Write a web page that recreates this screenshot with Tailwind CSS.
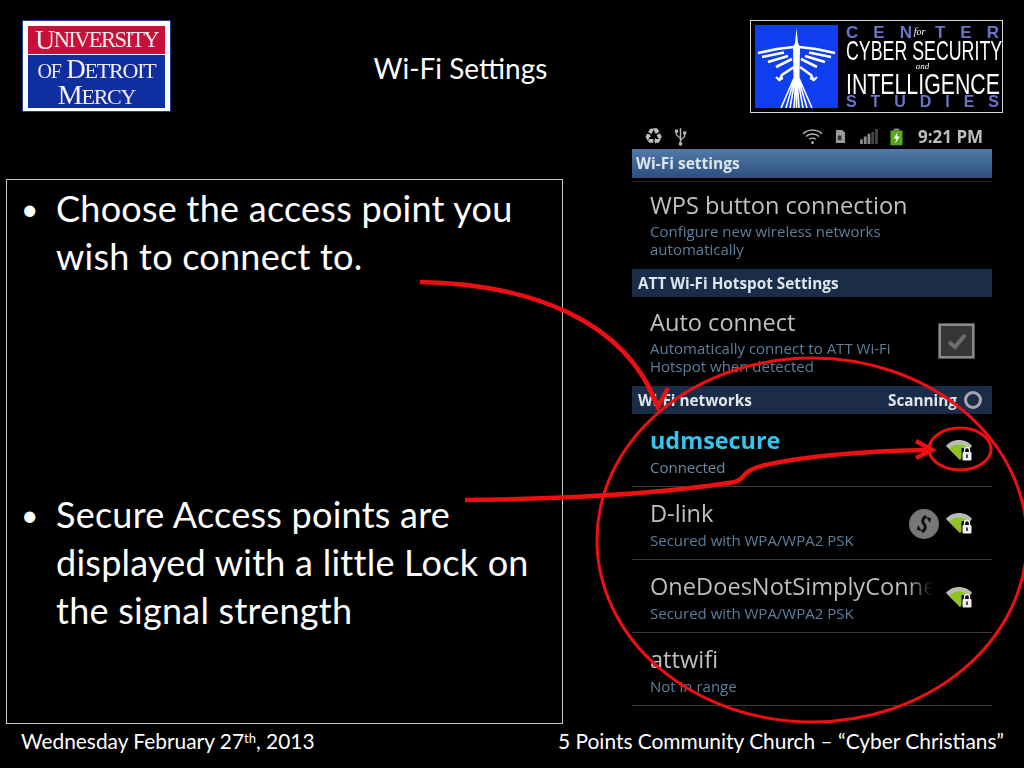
<!DOCTYPE html>
<html lang="en">
<head>
    <meta charset="UTF-8">
    <title>Wi-Fi Settings</title>
    <script src="https://cdn.jsdelivr.net/npm/@tailwindcss/browser@4"></script>
</head>
<body class="bg-black">
    <svg class="hidden">
        <defs>
            <symbol id="wifi-lock" viewBox="0 0 30 26">
                <path d="M2 9 C8 1 22 1 28 9 L16 23 Z" fill="#b9bcb2"/>
                <path d="M5.5 11.5 C10 6 20 6 25 11.5 L16 22.5 Z" fill="#8fc31f"/>
                <rect x="17.5" y="11" width="11" height="13" rx="1" fill="#000"/>
                <rect x="18.5" y="15" width="9" height="8.5" rx="1" fill="#f0f0f0"/>
                <path d="M20.5 15 V13 a2.5 2.5 0 0 1 5 0 V15" fill="none" stroke="#f0f0f0" stroke-width="1.4"/>
                <rect x="22.2" y="17.5" width="1.6" height="3.5" fill="#222"/>
            </symbol>
        </defs>
    </svg>

    <div class="relative w-[1024px] h-[768px] overflow-hidden bg-black font-['Lato',sans-serif] text-white">
        <!-- Header -->
        <header class="h-[124px] flex items-start pt-5 pl-[22px] pr-[21px]">
            <!-- UDM logo -->
            <div class="w-[149px] h-[92px] bg-white border border-[#1c3f9c] p-[5px] flex flex-col font-['Liberation_Serif',serif] text-[#f6eef0] shrink-0 blur-[0.3px]">
                <div class="h-[29px] bg-[#c8103a] flex items-center justify-center text-[28px] leading-none tracking-[-1.6px]">U<span class="text-[22.5px]">NIVERSITY</span></div>
                <div class="flex-1 mt-px bg-[#0f2fa0] flex flex-col items-center pt-[3px] leading-none">
                    <div class="text-[27px] tracking-[-1.2px] leading-[23px] whitespace-nowrap"><span class="text-[20px]">OF</span> D<span class="text-[22px]">ETROIT</span></div>
                    <div class="text-[28px] tracking-[-1.2px] leading-[23px]">M<span class="text-[22px]">ERCY</span></div>
                </div>
            </div>
            <div class="flex-1 text-center text-[28px] leading-none mt-[34px]">Wi-Fi Settings</div>
            <!-- Center logo -->
            <div class="w-[253px] h-[93px] border border-[#d8d8d8] p-1 flex gap-2 shrink-0">
                <div class="w-[83px] h-[83px] bg-[#0f3df0] shrink-0">
                    <svg viewBox="0 0 83 83" class="w-full h-full blur-[0.3px]" fill="none" stroke="#fff">
                        <path d="M41.5 3 L43 18 L45 22 L44.5 52 L38.5 52 L38 22 L40 18 Z" fill="#fff" stroke="none"/>
                        <g stroke-width="2.6">
                            <path d="M3 28 L22 24 M7 32 L29 27.5 M13 37 L33 31 M21 42 L37 34"/>
                            <path d="M80 28 L61 24 M76 32 L54 27.5 M70 37 L50 31 M62 42 L46 34"/>
                            <path d="M22 24 L39 22 M61 24 L44 22"/>
                            <path d="M39 42 L27 50 L24 56 M45 42 L56 50 L59 56"/>
                        </g>
                        <path d="M21 52 L24 55 L28 53 M62 52 L59 55 L55 53" stroke-width="2"/>
                        <g stroke-width="1.6">
                            <path d="M39.5 52 L26 83 M40 52 L31 83 M40.5 52 L35 83 M41 52 L39 83 M41.5 52 L41.5 83 M42 52 L44 83 M42.5 52 L48 83 M43 52 L52 83 M43.5 52 L57 83"/>
                        </g>
                    </svg>
                </div>
                <div class="w-[153px] shrink-0 flex flex-col font-['Liberation_Sans',sans-serif] blur-[0.3px]">
                    <div class="w-[153px] flex justify-between items-center h-[14px] text-[17px] font-bold text-[#6a74c8] leading-none">
                        <span>C</span><span>E</span>
                        <span class="relative">N<span class="absolute left-[14px] top-[3px] font-['Liberation_Serif',serif] italic font-normal text-[10px] text-white">for</span></span>
                        <span class="ml-[8px]">T</span><span>E</span><span>R</span>
                    </div>
                    <div class="h-[22px] w-[241px] text-[28px] leading-[24px] whitespace-nowrap origin-left scale-x-[0.635]">CYBER SECURITY</div>
                    <div class="h-[11px] text-center font-['Liberation_Serif',serif] italic text-[9px] leading-[11px]">and</div>
                    <div class="h-[24px] w-[216px] text-[30px] leading-[24px] whitespace-nowrap origin-left scale-x-[0.71]">INTELLIGENCE</div>
                    <div class="w-[153px] flex justify-between items-center h-[12px] text-[16px] font-bold text-[#6a74c8] leading-none"><span>S</span><span>T</span><span>U</span><span>D</span><span>I</span><span>E</span><span>S</span></div>
                </div>
            </div>
        </header>

        <!-- Main -->
        <main class="h-[600px] flex items-start">
            <section class="w-[557px] h-[545px] ml-1.5 mt-[55px] border border-[#c8c8c8] pt-1 pl-[14px] text-[36px] leading-[48px] tracking-[0.25px] shrink-0">
                <div class="flex"><span class="w-[35px] text-[30px] shrink-0">•</span><p>Choose the access point you<br>wish to connect to.</p></div>
                <div class="flex mt-[210px]"><span class="w-[35px] text-[30px] shrink-0">•</span><p>Secure Access points are<br>displayed with a little Lock on<br>the signal strength</p></div>
            </section>

            <!-- Phone screenshot -->
            <section class="w-[360px] ml-[69px] shrink-0 font-['Open_Sans',sans-serif] text-[#c0c0c0] blur-[0.3px]">
                <div class="h-[25px] flex items-center pl-3 pr-2 text-[#bdbdbd]">
                    <span class="w-[22px] text-[22px] leading-none font-bold font-['DejaVu_Sans',sans-serif]">♻</span>
                    <svg viewBox="0 0 14 20" class="w-[13px] h-[19px] ml-2" fill="#b5b5b5" stroke="#b5b5b5">
                        <path d="M7 1 V18" stroke-width="1.6"/><path d="M7 12 L2.5 8 V5 M7 14 L11.5 10 V7" fill="none" stroke-width="1.3"/>
                        <circle cx="7" cy="18" r="1.6"/><rect x="1.5" y="3" width="2.4" height="2.4"/><rect x="10.3" y="5" width="2.4" height="2.4"/>
                    </svg>
                    <svg viewBox="0 0 22 18" class="w-[21px] h-[17px] ml-[115px]" fill="none" stroke="#bbb" stroke-width="1.4">
                        <path d="M1 6 C6 1 16 1 21 6 M4 9 C8 5.5 14 5.5 18 9 M7.5 12 C9.5 10.5 12.5 10.5 14.5 12"/>
                        <circle cx="11" cy="15.5" r="1.4" fill="#bbb" stroke="none"/>
                    </svg>
                    <svg viewBox="0 0 12 16" class="w-[11px] h-[15px] ml-3" ><path d="M1 1 H8 L11 4 V15 H1 Z" fill="#9a9a9a"/><path d="M3 7 H7 V12 H3 Z" fill="#333"/></svg>
                    <svg viewBox="0 0 20 16" class="w-[19px] h-[15px] ml-[13px]" fill="#8a8a8a"><rect x="1" y="11" width="3" height="5"/><rect x="5" y="8" width="3" height="8"/><rect x="9" y="5" width="3" height="11"/><rect x="13" y="3" width="3" height="13" fill="#444"/><rect x="17" y="0" width="3" height="16" fill="#444"/></svg>
                    <svg viewBox="0 0 14 18" class="w-[13px] h-[18px] ml-[12px]"><rect x="4" y="0" width="6" height="2" fill="#999"/><rect x="0.5" y="2" width="13" height="16" rx="1" fill="#58a818"/><path d="M8 4 L4 10.5 H7 L5.5 16 L10.5 8.5 H7.5 Z" fill="#fff"/></svg>
                    <span class="ml-[15px] text-[17px] font-bold leading-none">9:21 PM</span>
                </div>
                <div class="h-[29px] flex items-center pl-1 text-[15.5px] font-bold text-[#dfe5ec] bg-linear-to-b from-[#527aa8] to-[#2c4f7e]">Wi-Fi settings</div>
                <div class="h-[88px] mt-[3px] border-t border-[#222] pl-[18px] pt-1.5">
                    <div class="text-[23.6px] leading-[34px]">WPS button connection</div>
                    <div class="text-[15px] leading-[18px] text-[#5d7f9c]">Configure new wireless networks<br>automatically</div>
                </div>
                <div class="h-[28px] flex items-center pl-1.5 text-[15.3px] font-bold text-[#dfe5ec] bg-[#1a2c48]">ATT Wi-Fi Hotspot Settings</div>
                <div class="h-[89px] flex items-start justify-between pl-[18px] pr-[18px] pt-2">
                    <div>
                        <div class="text-[23.6px] leading-[34px]">Auto connect</div>
                        <div class="text-[15px] leading-[18px] text-[#5d7f9c]">Automatically connect to ATT Wi-Fi<br>Hotspot when detected</div>
                    </div>
                    <div class="w-[35px] h-[34px] mt-[19px] bg-[#363636] border-2 border-[#8a8a8a] outline outline-[#555] flex items-center justify-center">
                        <svg viewBox="0 0 24 24" class="w-[24px] h-[24px]" fill="none" stroke="#6e6e6e" stroke-width="4"><path d="M4 13 L10 18 L20 6"/></svg>
                    </div>
                </div>
                <div class="h-[28px] flex items-center justify-between pl-1.5 pr-[10px] text-[15.3px] font-bold text-[#dfe5ec] bg-[#1a2c48]">
                    <span>Wi-Fi networks</span>
                    <span class="flex items-center gap-[7px]">Scanning<span class="w-[18px] h-[18px] rounded-full border-[3px] border-[#a8a8a8]"></span></span>
                </div>
                <div class="h-[73px] relative border-b border-[#3a3a3a] pl-[18px] pt-[9px]">
                    <div class="text-[23.4px] leading-[34px] font-bold text-[#35c5ee]">udmsecure</div>
                    <div class="text-[15px] leading-[20px] text-[#6c8aa4]">Connected</div>
                    <svg class="absolute right-[18px] top-[23px] w-[30px] h-[26px]"><use href="#wifi-lock"/></svg>
                </div>
                <div class="h-[73px] relative border-b border-[#3a3a3a] pl-[18px] pt-[9px]">
                    <div class="text-[23.6px] leading-[34px]">D-link</div>
                    <div class="text-[15px] leading-[20px] text-[#5d7f9c]">Secured with WPA/WPA2 PSK</div>
                    <span class="absolute left-[277px] top-[22px] w-[30px] h-[30px] rounded-full bg-[#777] flex items-center justify-center">
                        <svg viewBox="0 0 20 20" class="w-[20px] h-[20px]" fill="none" stroke="#111" stroke-width="3"><path d="M12 2 C8 5 8 8 10 10 M8 18 C12 15 12 12 10 10"/><path d="M4 11 L8 17 L3 16 Z M16 9 L12 3 L17 4 Z" fill="#111" stroke="none"/></svg>
                    </span>
                    <svg class="absolute right-[18px] top-[23px] w-[30px] h-[26px]"><use href="#wifi-lock"/></svg>
                </div>
                <div class="h-[73px] relative border-b border-[#3a3a3a] pl-[18px] pt-[9px]">
                    <div class="w-[287px] overflow-hidden whitespace-nowrap text-[23.6px] leading-[34px] text-transparent bg-clip-text bg-linear-to-r from-[#c0c0c0] from-[90%] to-black">OneDoesNotSimplyConnect</div>
                    <div class="text-[15px] leading-[20px] text-[#5d7f9c]">Secured with WPA/WPA2 PSK</div>
                    <svg class="absolute right-[18px] top-[24px] w-[30px] h-[26px]"><use href="#wifi-lock"/></svg>
                </div>
                <div class="h-[73px] border-b border-[#3a3a3a] pl-[18px] pt-[9px]">
                    <div class="text-[23.6px] leading-[34px]">attwifi</div>
                    <div class="text-[15px] leading-[20px] text-[#5d7f9c]">Not in range</div>
                </div>
            </section>
        </main>

        <!-- Footer -->
        <footer class="h-[44px] flex items-start justify-between pl-[21px] pr-5 pt-[3px] text-[20.9px] leading-[28px]">
            <span>Wednesday February 27<sup class="text-[13px]">th</sup>, 2013</span>
            <span>5 Points Community Church – “Cyber Christians”</span>
        </footer>

        <!-- Red annotations drawn over the slide -->
        <svg class="absolute inset-0 w-[1024px] h-[768px] pointer-events-none" viewBox="0 0 1024 768" fill="none" stroke="#ee0f14">
            <ellipse cx="812" cy="540" rx="215" ry="182" stroke-width="3"/>
            <ellipse cx="960" cy="449" rx="31" ry="21" stroke-width="3"/>
            <path d="M420 282 C530 284 625 320 657 405" stroke-width="4.5"/>
            <path d="M648 386 L658 407 L668 388" stroke-width="4.5"/>
            <path d="M465 500 C560 499 660 494 735 482 C748 478 738 472 765 465 C810 455 870 451 930 450" stroke-width="4.5"/>
            <path d="M916 441 L932 450 L916 458" stroke-width="4.5"/>
        </svg>
    </div>
</body>
</html>
